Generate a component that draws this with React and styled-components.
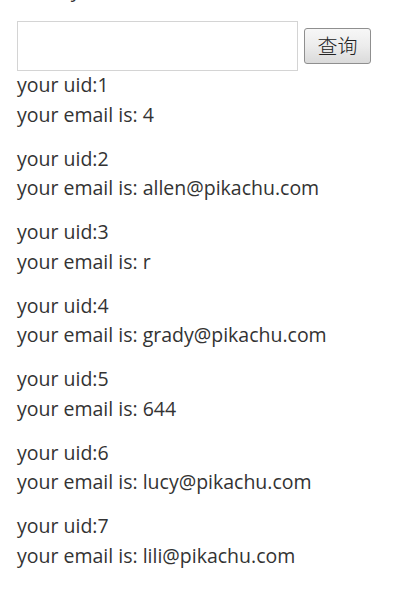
import React from 'react'
import styled, { createGlobalStyle } from 'styled-components'

const GlobalStyle = createGlobalStyle`
    html, body {
        margin: 0;
        padding: 0;
        background: #ffffff;
    }
    body {
        font-family: "Open Sans", "Noto Sans CJK SC", sans-serif;
        font-size: 19.5px;
        line-height: 29.25px;
        color: #333333;
    }
`

const Page = styled.div`
    padding: 0 17px;
`

const Title = styled.h3`
    margin: -25px 0 0;
    font-size: 19.5px;
    font-weight: 400;
    line-height: 29.25px;
`

const SearchForm = styled.form`
    display: flex;
    align-items: center;
    gap: 6px;
    margin: 17px 0 0;
`

const Input = styled.input`
    box-sizing: border-box;
    width: 281px;
    height: 50px;
    border: 1px solid #d4d4d4;
    padding: 0 8px;
    font-size: 19.5px;
    font-family: inherit;
    outline: none;
`

const Button = styled.button`
    box-sizing: border-box;
    width: 67px;
    height: 36px;
    margin-top: -1px;
    padding: 0;
    border: 1px solid #8f8f8f;
    border-radius: 3px;
    background: linear-gradient(#f7f7f7, #ececec 50%, #dadada);
    font-family: "Noto Sans CJK SC", sans-serif;
    font-size: 20px;
    font-weight: 300;
    line-height: 1;
    color: #222222;
`

const Record = styled.p`
    margin: 0 0 15px;
    position: relative;
    top: -1px;
`

const users = [
    { uid: 1, email: '4' },
    { uid: 2, email: 'allen@pikachu.com' },
    { uid: 3, email: 'r' },
    { uid: 4, email: 'grady@pikachu.com' },
    { uid: 5, email: '644' },
    { uid: 6, email: 'lucy@pikachu.com' },
    { uid: 7, email: 'lili@pikachu.com' }
]

const App = () => (
    <Page>
        <GlobalStyle />
        <Title>Enter your uid</Title>
        <SearchForm onSubmit={e => e.preventDefault()}>
            <Input type='text' name='uid' />
            <Button type='submit'>查询</Button>
        </SearchForm>
        { users.map(u => (
            <Record key={u.uid}>
                your uid:{u.uid}<br />
                your email is: {u.email}
            </Record>
        )) }
    </Page>
)

export default App
